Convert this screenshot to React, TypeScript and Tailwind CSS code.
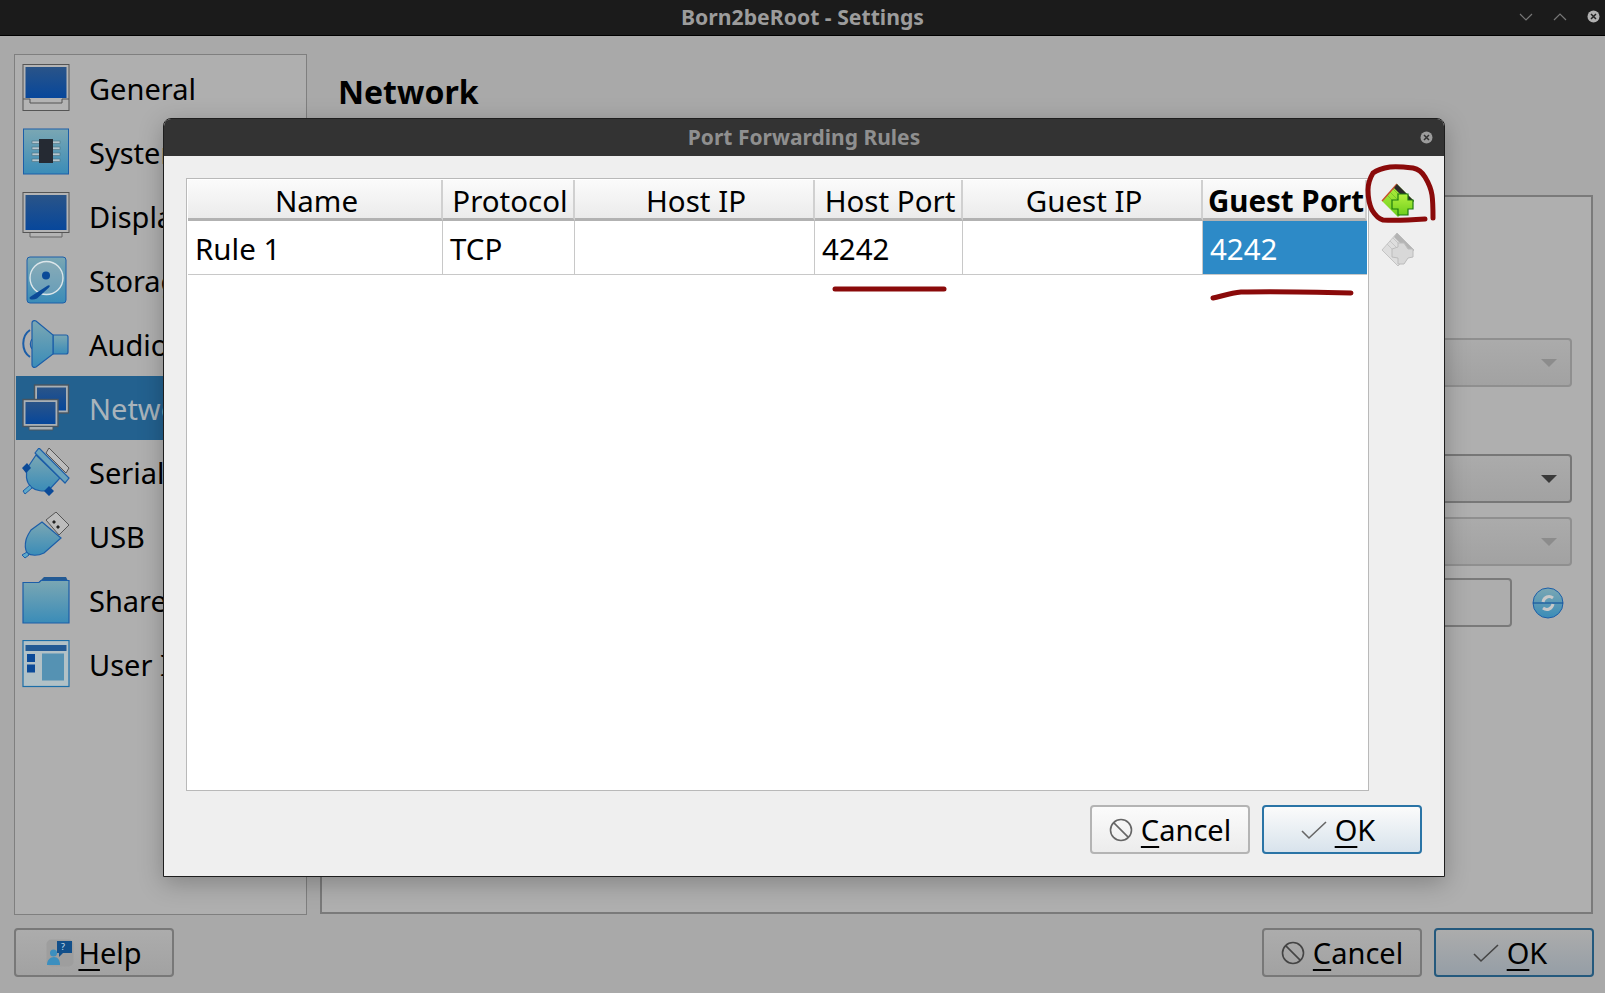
import React from "react";

const blue = "#0b4a98";

const Defs = () => (
  <svg width="0" height="0" className="absolute">
    <defs>
      <linearGradient id="screen" x1="0" y1="0" x2="0" y2="1">
        <stop offset="0" stopColor="#2a5488" />
        <stop offset="1" stopColor="#07479b" />
      </linearGradient>
      <linearGradient id="tealg" x1="0" y1="0" x2="0" y2="1">
        <stop offset="0" stopColor="#7ba7b3" />
        <stop offset="1" stopColor="#3a8cb8" />
      </linearGradient>
      <linearGradient id="greeng" x1="0" y1="0" x2="0" y2="1">
        <stop offset="0" stopColor="#b4f040" />
        <stop offset="1" stopColor="#6fd01c" />
      </linearGradient>
    </defs>
  </svg>
);

const Icon: React.FC<{ children: React.ReactNode }> = ({ children }) => (
  <svg width="48" height="48" viewBox="0 0 48 48" className="shrink-0">
    {children}
  </svg>
);

const GeneralIcon = () => (
  <Icon>
    <rect x="1" y="0.5" width="46" height="46" fill="#b4b4b4" stroke="#555" />
    <rect x="3.5" y="3" width="41" height="31" fill="url(#screen)" />
    <path d="M1 35h7v4h32v-4h7" fill="none" stroke="#555" />
  </Icon>
);
const SystemIcon = () => (
  <Icon>
    <rect x="1.5" y="1" width="45" height="45" fill="url(#tealg)" stroke="#1c5ea8" />
    <g fill="#b5c6cf" stroke="#49707f" strokeWidth="0.6">
      <rect x="10" y="13" width="28" height="2.6" />
      <rect x="10" y="19" width="28" height="2.6" />
      <rect x="10" y="25" width="28" height="2.6" />
      <rect x="10" y="31" width="28" height="2.6" />
    </g>
    <rect x="17" y="11" width="14" height="24" fill="#252a33" />
  </Icon>
);
const DisplayIcon = () => (
  <Icon>
    <rect x="1" y="0.5" width="46" height="40" fill="#b4b4b4" stroke="#555" />
    <rect x="3.5" y="3" width="41" height="35" fill="url(#screen)" />
    <path d="M8 41v4h32v-4" fill="#b4b4b4" stroke="#666" />
  </Icon>
);
const StorageIcon = () => (
  <Icon>
    <rect x="5" y="1" width="39" height="46" rx="3" fill="url(#tealg)" stroke="#1c5ea8" />
    <circle cx="24.5" cy="22" r="16.5" fill="#a9b8bd" fillOpacity="0.35" stroke="#dce6ea" strokeWidth="1.4" />
    <circle cx="24" cy="19.5" r="4" fill={blue} />
    <path d="M8 41l17-11c2-1.5 4-.5 2 1.5l-12 11c-4 2-9 1-7-1.5z" fill={blue} />
  </Icon>
);
const AudioIcon = () => (
  <Icon>
    <path d="M8 10C-1 16-1 31 8 37" fill="none" stroke="#1c5ea8" strokeWidth="2" />
    <path d="M10 19c-2 3-2 7 0 10" fill="none" stroke="#1c5ea8" strokeWidth="1.2" />
    <path d="M31 15h13c1 0 2 1 2 2v15c0 1-1 2-2 2H31z" fill="url(#tealg)" stroke="#1c5ea8" strokeWidth="1.2" />
    <path d="M10 3c0-2 2-3 4-2l17 14v19L14 47c-2 1-4 0-4-2z" fill="url(#tealg)" stroke="#1c5ea8" strokeWidth="1.2" />
  </Icon>
);
const NetworkIcon = () => (
  <Icon>
    <rect x="12.5" y="1" width="34" height="28" fill="#a9b0b5" stroke="#4a5660" strokeWidth="1.4" />
    <rect x="15" y="3.5" width="29" height="23" fill="url(#screen)" />
    <rect x="1" y="15.5" width="35" height="27" fill="#a9b0b5" stroke="#4a5660" strokeWidth="1.4" />
    <rect x="3.5" y="18" width="30" height="22" fill="url(#screen)" />
    <path d="M7 43v3h24v-3" fill="#a9b0b5" stroke="#4a5660" />
  </Icon>
);
const SerialIcon = () => (
  <Icon>
    <path d="M24 5l3-5 20 20-3 5z" fill="#bdbdbd" stroke="#555" />
    <path d="M14 7L6 19C3 26 4 34 9 39c5 4 13 5 18 3l11-12z" fill="url(#tealg)" stroke="#1c5ea8" strokeWidth="1.2" />
    <path d="M13 5l4-5 30 30-4 5z" fill="#6ba4bd" stroke="#1c5ea8" strokeWidth="1.2" />
    <path d="M0 20l5-5 4 5-5 5zM22 43l5-5 5 5-5 5z" fill={blue} />
    <path d="M8 37l-7 6 2 3 7-6z" fill="#5ea9c9" stroke="#1c5ea8" />
  </Icon>
);
const UsbIcon = () => (
  <Icon>
    <path d="M24 8L34 0l13 13-10 10z" fill="#bdbdbd" stroke="#555" />
    <path d="M32 8l2 2-2 2-2-2zM36 13l2 2-2 2-2-2z" fill="#222" />
    <path d="M20 10l19 16-17 15c-6 3-13 3-17 0-2-4-2-9-1-13 1-4 3-7 5-10z" fill="url(#tealg)" stroke="#1c5ea8" strokeWidth="1.2" />
    <path d="M0 43l5-3 2 3-4 3z" fill="#5ea9c9" stroke="#1c5ea8" />
  </Icon>
);
const SharedIcon = () => (
  <Icon>
    <path d="M17 6l5-5h22l3 6z" fill="#235a94" />
    <path d="M1 6.5h16l2-2h28V47H1z" fill="url(#tealg)" stroke="#1c5ea8" strokeWidth="1.2" />
  </Icon>
);
const UserIfaceIcon = () => (
  <Icon>
    <rect x="1" y="0.5" width="46" height="46" fill="#b2c1c6" stroke="#1c6ea8" strokeWidth="1.2" />
    <rect x="3.5" y="5" width="41" height="6" fill="#235a94" />
    <rect x="5" y="14" width="8" height="8" fill={blue} />
    <rect x="5" y="24.5" width="8" height="8" fill={blue} />
    <rect x="20" y="13.5" width="22" height="27" fill="#5592b3" />
  </Icon>
);

const navItems = [
  { label: "General", icon: GeneralIcon },
  { label: "System", icon: SystemIcon },
  { label: "Display", icon: DisplayIcon },
  { label: "Storage", icon: StorageIcon },
  { label: "Audio", icon: AudioIcon },
  { label: "Network", icon: NetworkIcon, selected: true },
  { label: "Serial Ports", icon: SerialIcon },
  { label: "USB", icon: UsbIcon },
  { label: "Shared Folders", icon: SharedIcon },
  { label: "User Interface", icon: UserIfaceIcon },
];

const CancelGlyph: React.FC<{ color: string }> = ({ color }) => (
  <svg width="24" height="24" viewBox="0 0 24 24" fill="none" stroke={color} strokeWidth="1.6">
    <circle cx="12" cy="12" r="10.5" />
    <path d="M4.6 4.6l14.8 14.8" />
  </svg>
);
const CheckGlyph: React.FC<{ color: string }> = ({ color }) => (
  <svg width="26" height="20" viewBox="0 0 26 20" fill="none" stroke={color} strokeWidth="1.6">
    <path d="M1 11l7 7L25 2" />
  </svg>
);

const CloseDot: React.FC<{ bg: string; fg: string }> = ({ bg, fg }) => (
  <svg width="13" height="13" viewBox="0 0 13 13">
    <circle cx="6.5" cy="6.5" r="6" fill={bg} />
    <path d="M4 4l5 5M9 4l-5 5" stroke={fg} strokeWidth="1.5" />
  </svg>
);

const Btn: React.FC<{ dim?: boolean; primary?: boolean; children: React.ReactNode }> = ({ dim, primary, children }) => {
  let cls = "border-[#b4b4b4] bg-gradient-to-b from-[#fbfbfb] to-[#ececec]";
  if (dim && primary) cls = "border-[#24597d] bg-gradient-to-b from-[#acacac] to-[#959ea6] pr-[8px]";
  else if (dim) cls = "border-[#787878] bg-gradient-to-b from-[#acacac] to-[#a2a2a2]";
  else if (primary) cls = "border-[#2a74a6] bg-gradient-to-b from-[#fbfbfb] to-[#d8e3ec] pr-[8px]";
  return (
    <div className={`flex h-[49px] w-[160px] items-center justify-center gap-2 rounded-[4px] border-2 text-[29px] text-black ${cls}`}>
      {children}
    </div>
  );
};

const Mn: React.FC<{ children: React.ReactNode }> = ({ children }) => (
  <span className="underline decoration-2 underline-offset-[5px]">{children}</span>
);

const CancelBtn: React.FC<{ dim?: boolean }> = ({ dim }) => (
  <Btn dim={dim}>
    <CancelGlyph color={dim ? "#444" : "#666"} />
    <span>
      <Mn>C</Mn>ancel
    </span>
  </Btn>
);
const OkBtn: React.FC<{ dim?: boolean }> = ({ dim }) => (
  <Btn dim={dim} primary>
    <CheckGlyph color={dim ? "#444" : "#666"} />
    <span>
      <Mn>O</Mn>K
    </span>
  </Btn>
);

const Combo: React.FC<{ disabled?: boolean; className?: string }> = ({ disabled, className }) => (
  <div
    className={`flex h-[49px] w-[580px] items-center justify-end rounded-[4px] border-2 bg-gradient-to-b from-[#ababab] to-[#a2a2a2] pr-[13px] ${
      disabled ? "border-[#8f8f8f]" : "border-[#777777]"
    } ${className ?? ""}`}
  >
    <div
      className={`h-0 w-0 border-x-[8px] border-t-[8px] border-x-transparent ${
        disabled ? "border-t-[#8c8c8c]" : "border-t-[#3a3a3a]"
      }`}
    />
  </div>
);

const columns = [
  { title: "Name", value: "Rule 1" },
  { title: "Protocol", value: "TCP" },
  { title: "Host IP", value: "" },
  { title: "Host Port", value: "4242" },
  { title: "Guest IP", value: "" },
  { title: "Guest Port", value: "4242", current: true },
];

const App: React.FC = () => {
  return (
    <div className="relative flex h-[993px] w-[1605px] flex-col overflow-hidden bg-[#a9a9a9] font-['Noto_Sans',sans-serif] text-black">
      <Defs />

      {/* title bar */}
      <div className="relative flex h-9 shrink-0 items-center justify-center border-b border-black bg-[#1b1b1b]">
        <span className="relative -top-px text-[21.2px] font-bold text-[#9c9c9c]">Born2beRoot - Settings</span>
        <div className="absolute right-[5px] top-[10px] flex items-center">
          <svg width="14" height="10" viewBox="0 0 14 10" fill="none" stroke="#777" strokeWidth="1.2">
            <path d="M1 2l6 6 6-6" />
          </svg>
          <svg width="14" height="10" viewBox="0 0 14 10" fill="none" stroke="#777" strokeWidth="1.2" className="ml-[20px]">
            <path d="M1 8l6-6 6 6" />
          </svg>
          <div className="ml-[20px]">
            <CloseDot bg="#b0b0b0" fg="#222" />
          </div>
        </div>
      </div>

      <div className="flex min-h-0 flex-1 gap-[13px] pl-[14px] pr-[12px] pt-[18px]">
        {/* sidebar */}
        <div className="h-[861px] w-[293px] shrink-0 border border-[#7f7f7f] bg-[#afafaf] p-px">
          {navItems.map((item) => {
            const I = item.icon;
            return (
              <div
                key={item.label}
                className={`flex h-16 items-center gap-[19px] whitespace-nowrap pl-[6px] text-[29px] ${
                  item.selected ? "bg-[#23618f] text-[#a9b4bb]" : ""
                }`}
              >
                <I />
                <span className="relative top-px">{item.label}</span>
              </div>
            );
          })}
        </div>

        {/* content */}
        <div className="flex min-w-0 flex-1 flex-col">
          <div className="pl-[18px] pt-[2px] text-[32px] font-bold leading-[72px]">Network</div>
          <div className="mt-[67px] flex h-[719px] flex-col items-end border-2 border-[#7a7a7a] bg-[#afafaf] pr-[19px] pt-[141px]">
            <Combo disabled />
            <Combo className="mt-[67px]" />
            <Combo disabled className="mt-[14px]" />
            <div className="mt-[12px] flex items-center pr-[7px]">
              <div className="h-[49px] w-[300px] rounded-[4px] border-2 border-[#7a7a7a] bg-[#adadad]" />
              <svg width="34" height="34" viewBox="0 0 34 34" className="ml-[19px]">
                <circle cx="17" cy="17" r="15" fill="url(#tealg)" stroke="#1c5ea8" />
                <path d="M2 17h30" stroke={blue} strokeWidth="1" />
                <path d="M22 12c-4-3-9-1-10 4M12 22c4 3 9 1 10-4" fill="none" stroke="#c8c8c8" strokeWidth="3" />
              </svg>
            </div>
          </div>
        </div>
      </div>

      {/* bottom buttons */}
      <div className="flex h-[65px] shrink-0 items-start justify-between pl-[14px] pr-[11px]">
        <Btn dim>
          <svg width="28" height="28" viewBox="0 0 28 28">
            <rect x="0.5" y="0.5" width="27" height="27" rx="5" fill="#9e9e9e" />
            <path d="M11 2h15v12H17l-4 4v-4h-2z" fill="#124f8a" />
            <circle cx="7.5" cy="14" r="3.5" fill="#3c8fbf" />
            <path d="M1 26c0-5 3-8 7-8s6 3 6 8z" fill="#3c8fbf" />
            <text x="15" y="11" fontSize="9" fill="#cfe0ee" fontFamily="Noto Sans">?</text>
          </svg>
          <span className="-ml-[4px]">
            <Mn>H</Mn>elp
          </span>
        </Btn>
        <div className="flex gap-[12px]">
          <CancelBtn dim />
          <OkBtn dim />
        </div>
      </div>

      {/* modal dialog */}
      <div className="absolute left-[163px] top-[118px] flex h-[759px] w-[1282px] flex-col overflow-hidden rounded-t-[8px] border border-[#1e1e1e] bg-[#efefef] shadow-[0_6px_24px_rgba(0,0,0,0.25)]">
        <div className="relative flex h-[37px] shrink-0 items-center justify-center bg-[#333333]">
          <span className="text-[21px] font-bold text-[#8f8f8f]">Port Forwarding Rules</span>
          <div className="absolute right-[11px] top-[12px]">
            <CloseDot bg="#9c9c9c" fg="#333" />
          </div>
        </div>
        <div className="flex flex-1 flex-col pl-[22px] pr-[22px] pt-[22px]">
          <div className="flex">
            <div className="h-[613px] w-[1183px] shrink-0 border border-[#b9b9b9] bg-white p-px">
              <div className="grid grid-cols-[255px_132px_240px_148px_240px_164px] text-[29.5px]">
                {columns.map((c) => (
                  <div
                    key={c.title}
                    className="flex h-[41px] items-center justify-center whitespace-nowrap border-b-[3px] border-r-2 border-b-[#b2b2b2] border-r-[#d0d0d0] bg-gradient-to-b from-[#fbfbfb] to-[#ebebeb] last:border-r-0"
                  >
                    <span className={`relative left-[2px] top-[2px] ${c.current ? "font-bold" : ""}`}>{c.title}</span>
                  </div>
                ))}
                {columns.map((c) => (
                  <div
                    key={c.title}
                    className={`flex h-[54px] items-center border-b border-r border-[#c8c8c8] pl-[7px] last:border-r-0 ${
                      c.current ? "bg-[#2d8ac7] text-white" : ""
                    }`}
                  >
                    <span className="relative top-[2px]">{c.value}</span>
                  </div>
                ))}
              </div>
            </div>
            <div className="flex flex-col gap-[13px] pl-[12px] pt-[5px]">
              <svg width="36" height="36" viewBox="0 0 36 36">
                <path d="M1 18L16 1l17 17-16 16z" fill="url(#greeng)" />
                <path d="M6 12l16 16M9 9l16 16M12 6l16 16" stroke="#7cc42a" strokeWidth="1" />
                <path d="M1 18L16 1" stroke="#c8502a" strokeWidth="1.4" />
                <path d="M16 1l17 17-4 3L13 5z" fill="#2b2b2b" />
                <path d="M11 17h6v-6h10v6h5v9h-5v6H17v-6h-6z" fill="url(#greeng)" stroke="#1d7a10" strokeWidth="1.2" />
              </svg>
              <svg width="36" height="36" viewBox="0 0 36 36">
                <path d="M1 18L16 1l17 17-16 16z" fill="#dedede" stroke="#c4c4c4" />
                <path d="M6 12l16 16M9 9l16 16M12 6l16 16" stroke="#c6c6c6" strokeWidth="1" />
                <path d="M16 1l17 17-4 3L13 5z" fill="#b4b4b4" />
                <path d="M11 17l6-2 0-4h6l4 6h5v8l-5 1-4 6h-6v-6l-6-1z" fill="#d8d8d8" stroke="#bcbcbc" />
              </svg>
            </div>
          </div>
          <div className="mt-[14px] flex justify-end gap-[12px]">
            <CancelBtn />
            <OkBtn />
          </div>
        </div>
      </div>

      {/* red marker annotations */}
      <svg className="pointer-events-none absolute inset-0" width="1605" height="993" fill="none" stroke="#8a0a0a" strokeWidth="5" strokeLinecap="round" strokeLinejoin="round">
        <path d="M1433 218c0-9 0-16-1-23-1-7-4-13-7-18-3-5-7-8-12-9-8-1-16-2-23-1-7 1-13 3-17 6-3 5-5 11-5 17 0 7 1 14 4 20 3 5 7 9 11 10 14 1 28 0 42-1" />
        <path d="M835 289h109" />
        <path d="M1213 298c9-2 18-5 28-6 37-1 74 0 110 1" />
      </svg>
    </div>
  );
};

export default App;
